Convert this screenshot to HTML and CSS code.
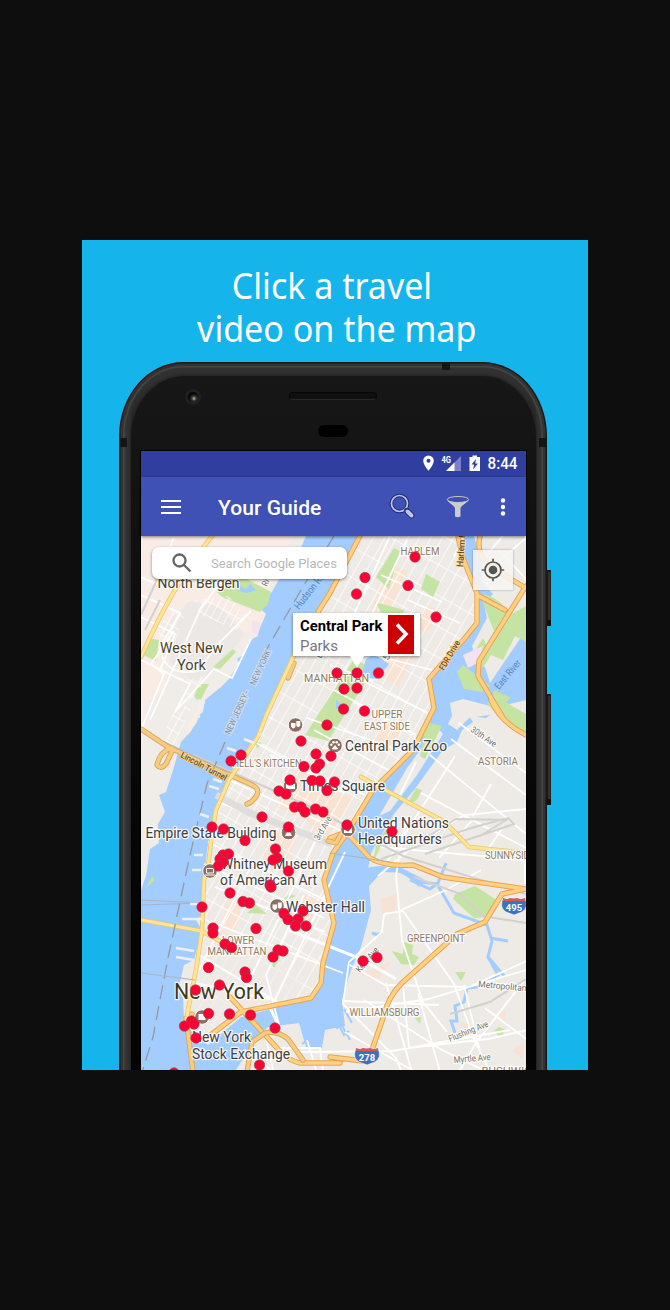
FILE: index.html
```html
<!DOCTYPE html>
<html lang="en">
<head>
<meta charset="utf-8">
<title>Travel video map</title>
<link rel="stylesheet" href="styles.css">
</head>
<body>
<main class="promo">
  <h1 class="headline"><span class="line-one">Click a travel</span><span class="line-two">video on the map</span></h1>
  <div class="phone">
    <i class="key key-power"></i><i class="key key-volume"></i>
    <i class="band band-top"></i><i class="band band-left"></i><i class="band band-right"></i>
    <div class="face">
      <i class="camera"></i><i class="speaker"></i><i class="sensor"></i>
      <div class="screen">
        <div class="status">
          <svg width="96" height="24" viewBox="423 451 96 24">
            <path fill="#fff" fill-rule="evenodd" d="M428.500 455.500a5.300 5.300 0 0 0-5.300 5.300c0 4 5.300 10 5.300 10s5.300-6 5.300-10a5.300 5.300 0 0 0-5.300-5.300zm0 3.300a2 2 0 1 1 0 4 2 2 0 0 1 0-4z"/>
            <text x="441.500" y="463" class="net" textLength="9.500" lengthAdjust="spacingAndGlyphs">4G</text>
            <path fill="#7882c5" d="M461 456v15h-15z"/><path fill="#fff" d="M454.500 462.500v8.500h-8.500z"/>
            <path fill="#fff" d="M469.500 457h3v-1.500h4.500v1.500h3v14h-10.500z"/>
            <path fill="#303f9f" d="M476 459l-4.500 5.500h2.700l-1.200 5 5-6h-2.800z"/>
            <text x="487.500" y="469" class="clock" textLength="30" lengthAdjust="spacingAndGlyphs">8:44</text>
          </svg>
        </div>
        <header class="toolbar">
          <svg class="menu" width="22" height="16" viewBox="0 0 22 16"><path stroke="#fff" stroke-width="2" d="M1 2h20M1 8h20M1 14h20"/></svg>
          <strong class="title">Your Guide</strong>
          <svg width="27" height="27" viewBox="0 0 27 27"><circle cx="10.500" cy="10.500" r="8" fill="none" stroke="#202b70" stroke-width="3.600"/><circle cx="10.500" cy="10.500" r="8" fill="none" stroke="#c1c7e8" stroke-width="1.700"/><path d="M15.800 15.800l2.700 2.700" stroke="#202b70" stroke-width="3"/><path d="M18.500 18.500l4 4" stroke="#202b70" stroke-width="6" stroke-linecap="round"/><path d="M18.500 18.500l4 4" stroke="#bdc4e9" stroke-width="4" stroke-linecap="round"/></svg>
          <svg class="funnel" width="24" height="24" viewBox="0 0 24 24"><path fill="#ccc" d="M1 4.500c2 4 8 6.500 8 9v8q2.700 1.500 5.500 0v-8c0-2.500 6-5 8.500-9z"/><ellipse cx="12" cy="4.500" rx="10.700" ry="3" fill="#3e4eaf" stroke="#c8c8c8"/></svg>
          <svg class="more" width="6" height="18" viewBox="0 0 6 18"><g fill="#fff"><circle cx="3" cy="2.500" r="2.200"/><circle cx="3" cy="9" r="2.200"/><circle cx="3" cy="15.500" r="2.200"/></g></svg>
        </header>
        <div class="map">
          <svg class="tiles" width="385" height="534" viewBox="141 536 385 534">
            <defs>
              <pattern id="grid" width="10" height="27" patternUnits="userSpaceOnUse" patternTransform="translate(350 700) rotate(29.500)"><path d="M0 0V27M0 0H10" stroke="#fff" stroke-width="1.500" fill="none"/></pattern>
              <pattern id="fine" width="7" height="13" patternUnits="userSpaceOnUse" patternTransform="translate(180 600) rotate(29)"><path d="M0 0V13M0 0H7" stroke="#fff" stroke-width="1.500"/></pattern>
              <clipPath id="island"><path d="M360 536H462L465 560 477 593 477 623 440 666 429 679 434 705 413 750 373 790 347 833 330 853 325 880 334 923 323 963 321 983 311 998 241 1017 208 1045 190 1030 186 1010 196 970 203 930 204 880 208 850 212 825 229 780 258 733 284 679 318 610Z"/></clipPath>
            </defs>
            <rect x="141" y="536" width="385" height="534" fill="#a3ccff"/>
            <path fill="#f0ece7" d="M141 536H306L293 566 279 579 272 592 258 606 266 614 258 626 258 636 249 641 243 655 237 659 239 663 229 679 221 687 205 700 203 712 196 718 191 731 181 742 174 767 166 792 159 795 165 812 158 824 159 843 150 849 146 876 141 890Z"/>
            <path fill="#f8ece5" d="M141 536H294L279 560 258 609 266 614 257 635 229 630 190 620 172 640 165 690 146 702 141 760ZM185 728L203 702 197 722 188 735Z"/>
            <path fill="#ebe8e5" d="M190 601l29 5 25 28-25 35-25 12-22-16-8-31 9-17z"/>
            <path fill="#eeeae6" d="M360 536H462L465 560 477 593 477 623 440 666 429 679 434 705 413 750 373 790 347 833 330 853 325 880 334 923 323 963 321 983 311 998 241 1017 208 1045 190 1030 184 1019 183 998 178 990 184 965 194 960 202 930 196 920 204 914 202 900 207 850 214 810 229 775 258 733 284 679 318 610Z"/>
            <path fill="#eeebe6" d="M474 536H526V630L490 683 485 667 478 665 472 646 487 618 484 604 493 594 481 581 483 568ZM526 700V1070H236L252 1044 268 1027 299 1023 306 1047 322 1048 325 1030 345 1026 342 1000 351 970 361 947 371 910 369 886 382 872 405 873 420 885 425 880 398 866 368 869 371 853 393 815 414 790 443 750 457 742 462 730 473 722 469 716 486 718 497 710 491 700 510 704ZM379 816L407 768 437 727 443 734 417 775 390 811Z"/>
            <path fill="#eeebe6" d="M452 716L450 703 463 699 490 706 496 714 469 718 457 730 448 724Z"/>
            <g clip-path="url(#island)"><path fill="#f9e4d4" d="M390 563l18 9-22 45-15-7zM392 638l25 11-18 37-14-7zM385 718l20 7-12 27-22-7zM300 768l35 13-23 43-38-19zM330 790l24 8-29 42-16-14zM270 830l26 10-13 32-22-8zM305 895l15 6-10 22-15-5zM226 900l16 5-8 31-12-5zM250 990l18 4-10 14-16-6zM425 604l17 8-14 20-11-4z"/><rect x="141" y="536" width="385" height="534" fill="url(#grid)"/><path fill="#eeeae6" opacity=".6" d="M203 920l65 24 34 40-35 28-75 31-8-40z"/></g>
            <g fill="#c5e3a3">
              <path d="M354 659L374 669 328 741 305 735ZM376 577l18-29 6 3-11 38zM375 602l29 8-1 8-20-3zM426 574l14 8-7 15-12-8zM217 592l26-15 28 15-3 12-8 8-38-15zM148 638l11 2-3 21-15-7zM213 667l7 2 16-17-3-3zM198 684l11 0-9 17-6-3zM255 741l7 2-5 6zM480 594q20 2 30 21l16-9v36l-11-6-12 24-12-5-8 13-14-8 14-22 4 8 7-15-8-20zM457 672l6-7 27 21-8 6-18-3zM494 690l17 8-13 11-9-4zM487 704l8-8 31 18v20l-19-11zM426 722l16 4-17 33-5-3zM376 846l12-21 7-13-9 23-14 30zM406 806l10-18 6 2-5 10zM455 894l20-8 25 16-14 15-12 1-21-19zM392 951l11 3 1-12 9 3-1 9 7 3-5 8-13-1zM455 972l11 0-5 9zM415 1018l6-1-1 7zM499 1027l7 3-6 7-6-6zM247 913l9-8 11 9zM278 903l12-9 6 2zM270 961l8-13 5 3-9 17zM146 888l9-8-3-4zM181 1020l8-4-2 17zM246 1035l5-3v9z"/>
              <path fill="#f7e3d5" d="M380 899l17-6-3 23-12-3zM360 974l32-13-15 20zM497 1013l9-3-2 11zM459 1023l10-1-1 9zM512 1050l12-7-2 16z"/>
              <path fill="#f3e3ee" d="M463 655l20-9-4 16-11 6zM252 620l9 3-3 12-6-3z"/>
            </g>
            <g fill="#a3ccff"><path d="M366 659l8-5 15 10-12 15-16-2zM238 585l8 4 4-5 6 6-9 3-6-1zM336 700l6 5-6 4z"/></g>
            <path fill="url(#fine)" d="M195 600l33-4 18 18-4 18-42-17zM166 610l19 5-12 31-15-10zM174 712l20-10-22 48-14-5zM185 680l20-4-8 22-14 5z"/>
            <path stroke="#a3ccff" stroke-width="3" fill="none" d="M368 869Q398 862 420 886M410 880l20 9 8-6 8-20M412 881l25 3q10 17 17 29l33 12 5 16-4 16 10 18-21 12-10 1-3 14-9 4 2 15-6 0 4 12M490 938l18 3M489 958l16 19M372 933l6 2 2-2"/>
            <path fill="none" stroke="#a3ccff" stroke-width="2" d="M302 1044l14-10 5 4 4-22 12 12 5-3M331 1010l13 25 5-4M344 1009l8 14M341 1024l9 16"/>
            <g fill="none" stroke="#fff" stroke-width="1.800">
              <path d="M141 595l39 18-20 34q3 30 38 24l20-27 33-33M141 660l49 24-15 28 39-43 18 9 19-39M150 720l50-110 25-34M141 730l23-56-13-10 23-33M141 577l15 7 18-47M141 617l34 17-15 36"/>
              <path d="M351 675l77 38M334 690l82 45M307 718l104 36M314 730l78 42M270 755l95 40M255 742l89 51M229 780l115 52M221 803l110 43M208 842l119 59M204 864l120 54M215 887l110 45M203 919l140 54M198 954l79 48M190 982l80 17M199 970l51-102M245 990l80-170M275 1000l70-148M304 895L266 975l13 50"/>
              <path d="M459 723l67 50M451 739l75 56M430 755l96 79M416 762l-16 33M455 756l-70 109M491 784l-18 32M504 826l-18 26M526 809l-62 6-56 36-30 25M380 847l145 13v24M421 793l105 55M474 818l-35 40M405 825l-9 50 6 65 21 62 24 30M399 911l47-21 35-20M384 914l19-3 51 73 20 55 17 35M384 914l-2 18-33 30-6 42 53 54 5 12M350 965l35 20 84 2 62-28M342 1001l97 4M346 1012l82-13 98-29M386 983l26 89M403 985l6 63 79-9 40-9M418 993l22 79M464 985l18 75M526 978l-50 65-16 27M485 1008l45 34M300 1052l92-1 118-21M345 1032l67 38M364 1000l76 49 47 23M316 1070l-9-30M275 1048h45l3 22M264 1030l9 40M245 1050l26 20"/>
              <path d="M464 536l-10 20M503 536l-20 23M526 538l-41 35M526 579l-27-29M390 536l-45 98M407 540l-46 97M330 665l43 16M408 600l52 23M381 575l61 27M355 650l77 20"/>
            </g>
            <path fill="none" stroke="#fff" stroke-width="3" d="M289 930l72 29 35 20M268 1003l14 30"/>
            <g fill="none" stroke="#d2d1cf" stroke-width="2"><path d="M193 755l120 53 90 48 123 38M381 859l90-31 37-10 6 6-89 30M480 836l26-16-50-1-32 20M450 1014l40-12 36-23M526 923l-43-7-25-23-44-16M145 630l15-30M141 615l23-51"/><path stroke="#e0dedc" stroke-width="7" d="M216 795l34 18 82 31"/></g>
            <g stroke-linejoin="round" stroke-linecap="round" fill="none">
              <path stroke="#e6a452" stroke-width="5.400" d="M360 536L330 593 318 612M458 536L462 556 477 593 477 623 465 638 440 666 429 679 434 708 413 750 373 790 347 833 333 853 324 880 334 923 323 963 321 983 311 998 241 1012 208 1037M526 586L479 661 478 676 502 716M491 700q9 22 35 35M480 536q-5 23 15 33 12 8 29 18M477 595l28 15M330 838l16-6 24 26q15 9 43 7l30 12 34 5 49 7M526 889l-24 5-17 28-28 12-54 48q-15 14-20 36l-10 29-10 14-33-4M230 997l47 51q9 12 23 15h40M186 1024l6-10"/>
              <path stroke="#ffcf82" stroke-width="3.500" d="M360 536L330 593 318 612M458 536L462 556 477 593 477 623 465 638 440 666 429 679 434 708 413 750 373 790 347 833 333 853 324 880 334 923 323 963 321 983 311 998 241 1012 208 1037M526 586L479 661 478 676 502 716M491 700q9 22 35 35M480 536q-5 23 15 33 12 8 29 18M477 595l28 15M330 838l16-6 24 26q15 9 43 7l30 12 34 5 49 7M526 889l-24 5-17 28-28 12-54 48q-15 14-20 36l-10 29-10 14-33-4M230 997l47 51q9 12 23 15h40M186 1024l6-10"/>
              <path stroke="#dda85d" stroke-width="5.400" d="M141 729l27 18 82 37q15 6 1 18l-4 2M172 748q-12 3-15 17 4 5 9-1l7-15M328 841l8 2 5-9M294 663l-6 15M186 1018l7 54M247 1072l5-30 13-9q12-3 23 6l15 21"/>
              <path stroke="#f7cb80" stroke-width="3.500" d="M141 729l27 18 82 37q15 6 1 18l-4 2M172 748q-12 3-15 17 4 5 9-1l7-15M328 841l8 2 5-9M294 663l-6 15M186 1018l7 54M247 1072l5-30 13-9q12-3 23 6l15 21"/>
              <path stroke="#eac769" stroke-width="4.600" d="M301 640L266 716 258 737 229 780 216 810 212 833 208 867 204 880 202 930 196 970 188 1010 186 1023M141 920l61 11 35 20M212 536q-40 50-71 121M361 777l84 45 24 25 57 6"/>
              <path stroke="#ffe498" stroke-width="3" d="M301 640L266 716 258 737 229 780 216 810 212 833 208 867 204 880 202 930 196 970 188 1010 186 1023M141 920l61 11 35 20M212 536q-40 50-71 121M361 777l84 45 24 25 57 6"/>
            </g>
            <path fill="none" stroke="#97999f" stroke-width="1.300" stroke-dasharray="14 7" d="M334 536l-30 49-39 67M225 742l-18 42-17 71-22 103-15 79-11 35"/>
            <path fill="none" stroke="#aab4c4" d="M141 905l62-2M141 900l62 3M141 973l54 7M330 853l60 9M163 741l65 32"/>
            <path stroke="#f1eeee" stroke-width="2.500" d="M205 703l-7-3M203 708l-6-2M200 717l-7-3M270 739l-10-5M244 739l10 4M236 751l-9-3M222 782l-9-3M219 789l-10-3M209 817l-9-3M206 835l-9 0M203 855l-9 0M201 870l-9 0M199 904l-9 0M202 919l-20 0M194 951l-18-3M194 960l-18-3"/>
            <g class="place area" text-anchor="middle">
              <text x="420" y="555" textLength="39">HARLEM</text><text x="336.500" y="682" textLength="65">MANHATTAN</text><text x="387" y="718" textLength="31">UPPER</text><text x="387" y="730" textLength="46">EAST SIDE</text><text x="267" y="767" textLength="69">HELL'S KITCHEN</text><text x="498" y="765" textLength="40">ASTORIA</text><text x="238" y="944" textLength="32">LOWER</text><text x="237" y="955" textLength="59">MANHATTAN</text><text x="436" y="942" textLength="58">GREENPOINT</text><text x="384.500" y="1016" textLength="70">WILLIAMSBURG</text><text x="510" y="859" textLength="50">SUNNYSIDE</text><text x="510" y="1075" textLength="57">BUSHWICK</text>
            </g>
            <g class="place town"><text x="157.500" y="588" textLength="82">North Bergen</text><text x="160" y="653" textLength="63">West New</text><text x="177" y="670" textLength="29">York</text></g>
            <text class="place city" x="174" y="999" textLength="90">New York</text>
            <g class="place road">
              <text transform="translate(444 671) rotate(-60)" textLength="33">FDR Drive</text><text transform="translate(463 567) rotate(-86)" textLength="48">Harlem River</text><text transform="translate(180 757) rotate(28)" textLength="51">Lincoln Tunnel</text>
            </g>
            <g class="place lane">
              <text transform="translate(470 731) rotate(34)" textLength="29">30th Ave</text><text transform="translate(319 841) rotate(-60)" textLength="26">3rd Ave</text><text transform="translate(360 973) rotate(-50)" textLength="30">Kent Ave</text><text transform="translate(478 987) rotate(5)" textLength="60">Metropolitan Av</text><text transform="translate(450 1042) rotate(-22)" textLength="42">Flushing Ave</text><text transform="translate(454 1063) rotate(-5)" textLength="37">Myrtle Ave</text><text transform="translate(267 587) rotate(-66)" textLength="29">River Rd</text><text transform="translate(388 661) rotate(-64)" textLength="15">5th</text><text transform="translate(321 659) rotate(-64)" textLength="24">Bdwy</text>
            </g>
            <g class="place river"><text transform="translate(299 610) rotate(-52)" textLength="51">Hudson River</text><text transform="translate(499 690) rotate(-50)" textLength="35">East River</text></g>
            <g class="place border"><text transform="translate(230 735) rotate(-65)" textLength="48">NEW JERSEY–</text><text transform="translate(255 686) rotate(-65)" textLength="38">NEW YORK</text></g>
            <g fill="#8d6e63" stroke="#fff"><circle cx="295.500" cy="725" r="7.300"/><circle cx="335" cy="745.500" r="7.300"/><circle cx="290.500" cy="786" r="7.300"/><circle cx="288.500" cy="832.500" r="7.300"/><circle cx="348" cy="829.500" r="7.300"/><circle cx="210" cy="871" r="7.300"/><circle cx="277" cy="906" r="7.300"/><circle cx="202" cy="1017" r="7.300"/></g>
            <g fill="#fff"><path d="M291 723h4.500v3.500q-2.200 4-4.500 0zM296.300 721h4v4.500q-2.500 3-4 0zM272.500 904.500h4.500v3.500q-2.200 4-4.500 0zM277.800 902.500h4v4.500q-2.500 3-4 0z"/><circle cx="331.300" cy="744.800" r="1.200"/><circle cx="333.500" cy="742.300" r="1.300"/><circle cx="336.700" cy="742.300" r="1.300"/><circle cx="338.800" cy="744.800" r="1.200"/><path d="M335 745l3.300 4q-3.300 1-6.600 0zM286 784h9v5h-9zM285 836l2-4 1.500-3 1.500 3 2 4zM344 827h8v6h-8zM198.500 1014h7v6h-7z"/></g><path fill="none" stroke="#fff" d="M206.500 868.500h7v4.500h-7zM205 875h10"/><circle cx="348" cy="830" r="1.500" fill="#8d6e63"/>
            <g class="place landmark"><text x="345" y="751" textLength="102">Central Park Zoo</text><text x="300" y="791" textLength="85">Times Square</text><text x="358" y="828" textLength="91">United Nations</text><text x="358" y="843.500" textLength="84">Headquarters</text><text x="145.500" y="838" textLength="131">Empire State Building</text><text x="221" y="868.500" textLength="106">Whitney Museum</text><text x="220" y="885" textLength="97">of American Art</text><text x="286" y="912" textLength="79">Webster Hall</text><text x="192" y="1042" textLength="59">New York</text><text x="192" y="1058.500" textLength="98">Stock Exchange</text></g>
            <g class="shields"><g transform="translate(367 1055)"><path d="M-11-7q4 2 7 0 4 1 7 0 4 2 8 0 4 10-3 14l-8 3-8-3q-7-4-3-14z" fill="#3c72be" stroke="#fff" stroke-width=".6"/><path d="M-11-7q4 2 7 0 4 1 7 0 4 2 8 0v3h-22z" fill="#d85a55"/><text y="5.500">278</text></g><g transform="translate(514 905)"><path d="M-11-7q4 2 7 0 4 1 7 0 4 2 8 0 4 10-3 14l-8 3-8-3q-7-4-3-14z" fill="#3c72be" stroke="#fff" stroke-width=".6"/><path d="M-11-7q4 2 7 0 4 1 7 0 4 2 8 0v3h-22z" fill="#d85a55"/><text y="5.500">495</text></g></g>
            <g id="pins"></g>
          </svg>
          <div class="search"><svg width="20" height="20" viewBox="0 0 20 20" fill="none" stroke="#666" stroke-width="2.300"><circle cx="7.500" cy="7.500" r="6"/><path d="M12 12l6.500 6.500"/></svg><span>Search Google Places</span></div>
          <div class="locate"><svg width="24" height="24" viewBox="0 0 24 24"><circle cx="12" cy="12" r="8" fill="none" stroke="#555" stroke-width="1.700"/><circle cx="12" cy="12" r="4.300" fill="#555"/><path stroke="#555" stroke-width="1.700" d="M12 .8v3M12 20.200v3M.8 12h3M20.200 12h3"/></svg></div>
          <div class="callout"><div><strong>Central Park</strong><span>Parks</span></div><b><svg width="26" height="39" viewBox="0 0 26 39"><path d="M9 9.500l9 9.500-9 9.500" fill="none" stroke="#fff" stroke-width="3.600"/></svg></b></div>
        </div>
      </div>
    </div>
  </div>
</main>
<script src="script.js"></script>
</body>
</html>
```
FILE: styles.css
```css
* { box-sizing: border-box; }
body { margin: 0; background: #0e0e0e; padding-top: 240px; height: 1310px; overflow: hidden; font-family: Roboto, sans-serif; }
.promo { width: 506px; height: 830px; margin: 0 auto; overflow: hidden; background: #15b5ec; }
.headline { margin: 0; height: 122px; padding-top: 24px; display: flex; flex-direction: column; align-items: center; font: 400 36px/43px "Noto Sans", sans-serif; color: #fff; }
.headline span { white-space: nowrap; transform: scaleX(.945); }
.line-one { margin-right: 6px; }
.line-two { margin-left: 4px; }
.phone { position: relative; width: 428px; height: 900px; margin-left: 37px; padding: 14px 11px 0 12px; border-radius: 64px 64px 0 0 / 74px 74px 0 0; background: linear-gradient(#313131 0 20px, transparent 80px), linear-gradient(90deg, #111 0 2px, #292929 2px 5px, #444340 6px, #333 7px, #303030 11px, #222 13px, #222 416px, #303030 418px, #333 421px, #454442 423px, #292929 425px, #111 427px); box-shadow: inset 0 0 0 1.500px #191919, inset 0 0 0 4px #333, inset 0 0 0 5.500px #454543, inset 0 0 0 6.500px #333; }
.face { height: 886px; padding: 74px 9px 0 10px; border-radius: 53px 53px 0 0 / 61px 61px 0 0; background: linear-gradient(#171717, #131313 100px, #060606 450px, #030303); box-shadow: 0 0 3px 1px #222; }
.camera, .speaker, .sensor, .key, .band { position: absolute; }
.camera { left: 66px; top: 27px; width: 16px; height: 16px; border: 3px solid #202020; border-radius: 50%; background: radial-gradient(circle at 60% 65%, #8e9659 0 1px, #3d3e49 2px, #050505 5px); }
.speaker { left: 170px; top: 30px; width: 88px; height: 8px; border: 1.500px solid #070707; border-bottom-color: #292929; border-radius: 4px; background: #101010; }
.sensor { left: 199px; top: 63px; width: 30px; height: 12px; border-radius: 6px; background: #000; }
.band { background: #151515; }
.band-top { left: 323px; top: 1px; width: 8px; height: 7px; }
.band-left, .band-right { top: 76px; width: 8px; height: 9px; }
.band-left { left: 0; }
.band-right { right: 0; }
.key { right: -4px; width: 4px; background: linear-gradient(90deg, #111, #3a3a3a 60%, #171717); border-top: 2px solid #161616; border-bottom: 6px solid #101010; }
.key-power { top: 208px; height: 56px; }
.key-volume { top: 332px; height: 111px; }
.screen { width: 387px; margin-left: -1px; border: 1px solid #000; }
.status { height: 26px; background: #303f9f; display: flex; justify-content: flex-end; padding-right: 7px; }
.net { font: 700 9px Roboto; fill: #fff; }
.clock { font: 500 16px Roboto; fill: #fff; }
.toolbar { position: relative; z-index: 2; height: 59px; background: #3f51b5; display: flex; align-items: center; padding-left: 19px; color: #fff; box-shadow: 0 1px 3px rgba(0,0,0,.5); }
.title { width: 171px; margin-left: 36px; font: 500 21px/26px Roboto; letter-spacing: .05px; white-space: nowrap; padding-top: 2px; }
.funnel { margin-left: 30px; }
.more { margin-left: 30px; }
.map { position: relative; width: 385px; height: 534px; overflow: hidden; }
.tiles { display: block; }
.place { stroke: rgba(255,255,255,.85); stroke-width: 2.500px; paint-order: stroke; stroke-linejoin: round; }
.area { font: 400 10px Roboto; fill: #927a5b; }
.town { font: 400 14px Roboto; fill: #4b3f29; }
.city { font: 400 22px Roboto; fill: #403821; }
.landmark { font: 400 14px Roboto; fill: #41403e; }
.road { font: 500 9px Roboto; fill: #664818; stroke: #ffda98; stroke-width: 1.500px; }
.lane { font: 400 9px Roboto; fill: #71706d; }
.river { font: 400 10px Roboto; fill: #5a83bc; stroke: none; }
.border { font: 400 9px Roboto; fill: #8292a6; stroke: #cedef1; }
.shields text { fill: #fff; font: 700 9.500px Roboto; text-anchor: middle; }
#pins circle { fill: #ff0035; stroke: #9a4350; stroke-width: .7px; }
.search, .locate, .callout { position: absolute; background: #fff; box-shadow: 0 1px 3px rgba(0,0,0,.45); }
.search { left: 11px; top: 11px; width: 195px; height: 32px; border-radius: 7px; display: flex; align-items: center; padding-left: 20px; gap: 19px; color: #b8b8b8; font-size: 13px; letter-spacing: -.02px; white-space: nowrap; }
.locate { left: 332px; top: 14px; width: 40px; height: 40px; display: grid; place-items: center; background: rgba(247,245,241,.87); box-shadow: 0 0 2px rgba(0,0,0,.35); }
.callout { left: 152px; top: 77px; width: 127px; height: 43px; display: flex; align-items: center; justify-content: space-between; padding: 0 6px 0 7px; }
.callout::after { content: ""; position: absolute; left: 57px; top: 43px; border: solid transparent; border-width: 12px 7px 0; border-top-color: #fff; }
.callout div { display: flex; flex-direction: column; font-size: 15px; line-height: 20px; color: #777; padding-top: 2px; }
.callout strong { color: #000; font-size: 14.800px; white-space: nowrap; }
.callout b { display: flex; margin-left: -4px; height: 39px; background: #c00; }
```
FILE: script.js
```js
// Video locations on the map canvas, as x,y pairs.
const places = `415,557 408,585.5 365,577.5 356.5,594 436,617 337,673 357,673 378.5,673 344,689 357,688 343.5,709 364.5,711 327,725 301,741 241,755 231,761 316,754 331,756 304,766.5 319.5,764 316,768 290,780 312,780.5 320,781 334.5,782 327,790.5 279,791 286,794 294.5,807 301,807 305,812 315.5,809 323,812 262,817 212,827 223.5,829 288.5,827 347,825 392,831.5 245,840.5 275.5,849 277,858 273,860 228.5,854 223,855 220,859 223,862 218.5,866 288.5,871 270,885 271,887 230,893 243,901.5 249.5,903 202,907 213,928 213,933 256,928.5 303,911 284,913.5 288,919.5 298,919 295.5,926 306,926 225,944 231.5,947.5 278,950 283,951 273,957 208.5,967.5 245,972 246.5,977.5 363,961 377,957.5 219.5,985 195.5,990 208.5,1013.5 229.5,1014 250.5,1015 191.5,1021 194,1024 184.5,1026 275,1028 196,1038 259.5,1065 174,1073`;
const layer = document.getElementById('pins');
for (const pair of places.split(' ')) {
  const [x, y] = pair.split(',');
  const pin = document.createElementNS('http://www.w3.org/2000/svg', 'circle');
  pin.setAttribute('cx', x);
  pin.setAttribute('cy', y);
  pin.setAttribute('r', 5.2);
  layer.append(pin);
}
for (const label of document.querySelectorAll('.place text, text.place')) label.setAttribute('lengthAdjust', 'spacingAndGlyphs');
```
